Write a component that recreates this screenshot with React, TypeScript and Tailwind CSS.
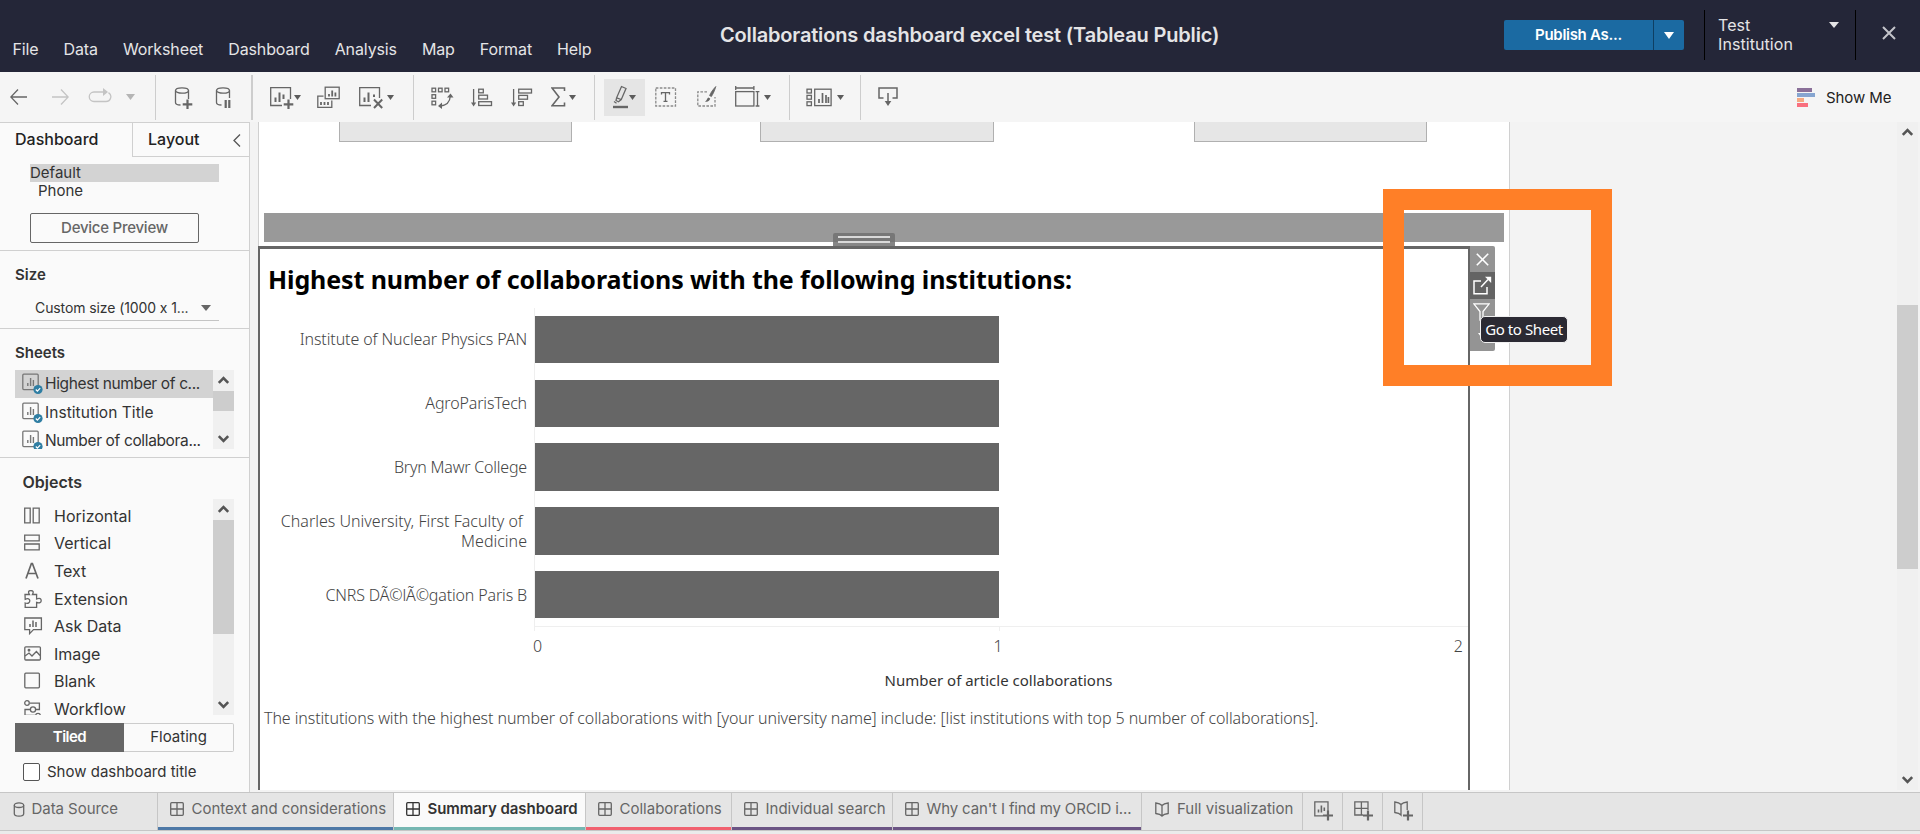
import type { ReactNode } from "react";

type IconProps = { w: number; h?: number; className?: string; children: ReactNode };

function Icon({ w, h = 24, className = "", children }: IconProps) {
  return (
    <svg
      width={w}
      height={h}
      viewBox={`0 0 ${w} ${h}`}
      fill="none"
      stroke="currentColor"
      strokeWidth="1.3"
      className={`shrink-0 ${className}`}
    >
      {children}
    </svg>
  );
}

function Caret({ className = "" }: { className?: string }) {
  return (
    <svg width="7" height="5" viewBox="0 0 7 5" className={`shrink-0 fill-[#5c5c5c] ${className}`}>
      <path d="M0 0H7L3.5 5Z" />
    </svg>
  );
}

function Divider({ className = "" }: { className?: string }) {
  return <div className={`h-[45px] w-px shrink-0 self-center bg-[#cdcdcd] ${className}`} />;
}

function GridIcon({ className = "" }: { className?: string }) {
  return (
    <Icon w={14} h={14} className={className}>
      <rect x="0.7" y="0.7" width="12.6" height="12.6" rx="1" />
      <path d="M7 1V13M1 7H13" />
    </Icon>
  );
}

function BookPath() {
  return <path d="M7 3.5C5.5 1.8 3 1.2 0.8 1V11.5C3 11.8 5.5 12.4 7 14C8.5 12.4 11 11.8 13.2 11.5V1C11 1.2 8.5 1.8 7 3.5ZM7 3.5V14" />;
}

const menus = ["File", "Data", "Worksheet", "Dashboard", "Analysis", "Map", "Format", "Help"];

function Header() {
  return (
    <header className="flex h-[72px] bg-[#242638] text-[#e4e4e6]">
      <nav className="mt-[39px] flex h-5 w-[720px] gap-[25px] pl-[12.5px] text-[16px] leading-5 tracking-[-0.12px]">
        {menus.map((m) => (
          <span key={m}>{m}</span>
        ))}
      </nav>
      <h1 className="mt-[23px] w-[784px] text-[20px] font-semibold leading-6 tracking-[-0.17px]">
        Collaborations dashboard excel test (Tableau Public)
      </h1>
      <div className="mt-[20px] flex h-[30px] w-[180px] overflow-hidden rounded-[2px] bg-[#1b6aa2] text-white">
        <div className="flex w-[149px] items-center justify-center text-[15px] font-semibold tracking-[-0.3px]">
          Publish As...
        </div>
        <div className="flex flex-1 items-center justify-center border-l border-[#0e3f63]">
          <svg width="10" height="7" viewBox="0 0 10 7" fill="white">
            <path d="M0 0H10L5 7Z" />
          </svg>
        </div>
      </div>
      <div className="ml-[20px] mt-[10px] flex h-[50px] w-[152px] border-x border-black pl-[13px] pt-[6px]">
        <div className="w-[110px] text-[16px] leading-[19px] tracking-[0.08px]">
          Test
          <br />
          Institution
        </div>
        <svg width="10" height="6" viewBox="0 0 10 6" fill="#e4e4e6" className="mt-[6px] ml-[1px]">
          <path d="M0 0H10L5 6Z" />
        </svg>
      </div>
      <svg width="14" height="14" viewBox="0 0 14 14" stroke="#c4c4ca" strokeWidth="2" className="ml-[26px] mt-[26px]">
        <path d="M1 1L13 13M13 1L1 13" />
      </svg>
    </header>
  );
}

function Toolbar() {
  return (
    <div className="flex h-[50px] items-center bg-[#f5f5f5] text-[#666]">
      <Icon w={17} className="ml-[10px]">
        <path d="M17 12H1M8 4.5L0.8 12L8 19.5" />
      </Icon>
      <Icon w={17} className="ml-[25px] text-[#c4c4c4]">
        <path d="M0 12H16M9 4.5L16.2 12L9 19.5" />
      </Icon>
      <Icon w={24} className="ml-[19px] text-[#c4c4c4]">
        <path d="M15 7H6A4.6 4.6 0 0 0 6 16.5H18A4.8 4.8 0 0 0 20.5 7.6" />
        <path d="M15 3L20 7L15 11Z" fill="currentColor" stroke="none" />
      </Icon>
      <svg width="9" height="6" viewBox="0 0 9 6" className="ml-[14px] fill-[#b5b5b5]">
        <path d="M0 0H9L4.5 6Z" />
      </svg>
      <Divider className="ml-[20px]" />
      <Icon w={19} className="ml-[18px]">
        <ellipse cx="8" cy="5.5" rx="6.5" ry="2.7" />
        <path d="M1.5 5.5V17.5C1.5 19 4 20 6.5 20M14.5 5.5V14" />
        <path d="M13.5 14.5V24M8.7 19.3H18.3" strokeWidth="2.2" />
      </Icon>
      <Icon w={17} className="ml-[22px]">
        <ellipse cx="8" cy="5.5" rx="6.5" ry="2.7" />
        <path d="M1.5 5.5V17.5C1.5 19 4 20 6.5 20M14.5 5.5V13" />
        <path d="M10.7 15V23M14.3 15V23" strokeWidth="2.2" />
      </Icon>
      <div className="ml-[19px] h-[45px] w-[2px] bg-[#cdcdcd]" />
      <Icon w={24} className="ml-[17px]">
        <path d="M12 20.5H0.7V2.7H20.5V14" />
        <path d="M5.5 17V12.5M9.5 17V7.5M13.5 14V9.5" strokeWidth="2" />
        <path d="M18.5 14.5V24M13.7 19.3H23.3" strokeWidth="2.2" />
      </Icon>
      <Caret />
      <Icon w={24} className="ml-[16px]">
        <rect x="8.2" y="2.2" width="14" height="11.5" />
        <path d="M12 11.5V9M15.2 11.5V5.5M18.4 11.5V7.5" strokeWidth="1.8" />
        <path d="M6.5 11.2H0.8V22.4H14.8V15.5" />
        <path d="M4 20V17M7.5 20V17M11 20V17" strokeWidth="1.8" />
      </Icon>
      <Icon w={25} className="ml-[18px]">
        <path d="M12 20.5H0.7V2.7H20.5V13" />
        <path d="M5.5 17V12.5M9.5 17V7.5M15 12V9.5" strokeWidth="2" />
        <path d="M15 14.5L23.2 23M23.2 14.5L15 23" strokeWidth="2" />
      </Icon>
      <Caret className="ml-[3px]" />
      <Divider className="ml-[19px]" />
      <Icon w={23} className="ml-[17px]">
        <rect x="1" y="3.2" width="3.6" height="3.6" />
        <rect x="7.5" y="3.2" width="3.6" height="3.6" />
        <rect x="14" y="3.2" width="3.6" height="3.6" />
        <rect x="1" y="9.7" width="3.6" height="3.6" />
        <rect x="1" y="16.2" width="3.6" height="3.6" />
        <path d="M9 21C15 20.5 19 17 19.3 11" />
        <path d="M11 17.5L7 21L11 24ZM16 12.5L19.5 8.5L22.5 12.5Z" fill="currentColor" stroke="none" />
      </Icon>
      <Icon w={22} className="ml-[17px]">
        <path d="M2.6 4V19" />
        <path d="M0 17.5H5.2L2.6 21.5Z" fill="currentColor" stroke="none" />
        <rect x="7.7" y="4.2" width="4.6" height="3.6" />
        <rect x="7.7" y="10.2" width="8.8" height="3.8" />
        <rect x="7.7" y="16.7" width="12.8" height="3.8" />
      </Icon>
      <Icon w={22} className="ml-[18px]">
        <path d="M2.6 4V19" />
        <path d="M0 17.5H5.2L2.6 21.5Z" fill="currentColor" stroke="none" />
        <rect x="7.7" y="4.2" width="12.8" height="3.8" />
        <rect x="7.7" y="10.4" width="8.8" height="3.8" />
        <rect x="7.7" y="16.7" width="4.6" height="3.8" />
      </Icon>
      <Icon w={15} className="ml-[18px]">
        <path d="M13.5 6V3H1L8 12L1 20.8H13.5V17.5" strokeWidth="1.6" />
      </Icon>
      <Caret className="ml-[3px]" />
      <Divider className="ml-[18px]" />
      <div className="ml-[9px] flex h-[37px] w-[41px] items-center bg-[#e5e5e5] pl-[8px]">
        <Icon w={17}>
          <path d="M9.5 1.5L14 3.5L9.3 14.5L4.6 12.8ZM4.6 12.8L4 15.5L6.5 16.8L9.3 14.5M2 16.5L4.5 18.2" />
          <path d="M1 22H16" strokeWidth="2.4" />
        </Icon>
        <Caret />
      </div>
      <Icon w={22} className="ml-[10px]">
        <rect x="0.8" y="3" width="19.7" height="18" strokeDasharray="2.6 1.4" stroke="#8a8a8a" />
        <path d="M6.5 9.5V7.6H14.5V9.5M10.5 7.6V16.4M8.5 16.4H12.5" />
      </Icon>
      <Icon w={20} className="ml-[20px]">
        <path d="M10 6.8H0.8V21H18V12" strokeDasharray="2.6 1.4" stroke="#8a8a8a" />
        <path d="M18.8 1.5C16 4.5 13.8 7.5 12.6 10.6L14.4 11.6C16.2 8.6 17.8 5.4 18.8 1.5Z" fill="currentColor" strokeWidth="0.8" />
        <path d="M8 16.5C9.8 15.8 9.8 13.6 11.2 12.4L13.2 13.6C12.8 16 10.6 17.2 8 16.5Z" fill="currentColor" stroke="none" />
      </Icon>
      <Icon w={25} className="ml-[18px]">
        <rect x="0.7" y="6.6" width="18.2" height="14.4" />
        <path d="M0.7 1V5M18.9 1V5M0.7 3H18.9M22.5 6.6V21M20.6 6.6H24.4M20.6 21H24.4" />
      </Icon>
      <Caret className="ml-[4px]" />
      <Divider className="ml-[18px]" />
      <Icon w={26} className="ml-[16px]">
        <rect x="1" y="4.2" width="4.4" height="3.8" />
        <rect x="1" y="10.4" width="4.4" height="3.8" />
        <rect x="1" y="16.8" width="4.4" height="3.8" />
        <rect x="8.7" y="4.2" width="16.4" height="16.4" />
        <path d="M13 18V14M16.5 18V8M20 18V10M22.4 18V12" strokeWidth="1.7" />
      </Icon>
      <Caret className="ml-[5px]" />
      <Divider className="ml-[16px]" />
      <Icon w={20} className="ml-[17px]">
        <path d="M5.5 13H1V3H19V13H14.5M10 8V17" strokeWidth="1.5" />
        <path d="M6.7 16H13.3L10 21Z" fill="currentColor" stroke="none" />
      </Icon>
      <svg width="19" height="20" viewBox="0 0 19 20" className="ml-auto">
        <path d="M0 1H15V5H0Z" fill="#8a7099" />
        <path d="M0 6H18V10H0Z" fill="#86a5d0" />
        <path d="M0 11H7V15H0Z" fill="#f4a982" />
        <path d="M0 16H11V20H0Z" fill="#f9707f" />
      </svg>
      <span className="ml-[10px] mt-[2px] w-[94px] text-[15px] leading-5 tracking-[-0.1px] text-[#222]">Show Me</span>
    </div>
  );
}

function Scroll({ children, className = "" }: { children: ReactNode; className?: string }) {
  return (
    <div className={`flex w-[21px] shrink-0 flex-col justify-between bg-[#f0f0f0] text-[#555] ${className}`}>
      <svg width="21" height="20" viewBox="0 0 21 20" fill="none" stroke="currentColor" strokeWidth="2.6" className="shrink-0">
        <path d="M5.8 12.8L10.5 8L15.2 12.8" />
      </svg>
      {children}
      <svg width="21" height="20" viewBox="0 0 21 20" fill="none" stroke="currentColor" strokeWidth="2.6" className="shrink-0">
        <path d="M5.8 7.2L10.5 12L15.2 7.2" />
      </svg>
    </div>
  );
}

function SheetIcon() {
  return (
    <Icon w={21} h={22} className="mt-[3px] text-[#777]">
      <rect x="0.8" y="1.2" width="15.4" height="15.4" rx="1" />
      <path d="M5.8 13V10M8.6 13V5M11.4 13V7" strokeWidth="1.4" />
      <circle cx="16" cy="16.5" r="4.6" fill="#2f7ea3" stroke="none" />
      <path d="M13.8 16.5L15.4 18.1L18.2 15.1" stroke="white" strokeWidth="1.2" />
    </Icon>
  );
}

const objects: { name: string; icon: ReactNode }[] = [
  { name: "Horizontal", icon: <path d="M0.7 1.2H6.2V15.8H0.7ZM9.2 1.2H15.2V15.8H9.2Z" /> },
  { name: "Vertical", icon: <path d="M0.7 1.2H15.2V6.8H0.7ZM0.7 10H15.2V15.8H0.7Z" /> },
  { name: "Text", icon: <path d="M2 16.5L7.4 1.5H8.4L14 16.5M4 11.5H12" strokeWidth="1.7" /> },
  {
    name: "Extension",
    icon: (
      <path d="M1 4.5H5.5C3.5 1.5 5 0.6 6.8 0.6S10.2 1.5 8.4 4.5H12.6V9C16 7.5 17.2 9 17.2 10.8S15.5 13.6 12.6 12.4V17.4H1.2V13C4.5 14 5.8 12.5 5.8 10.8S4 8 1.2 9.3Z" />
    ),
  },
  {
    name: "Ask Data",
    icon: (
      <>
        <path d="M0.8 1H17.4V12.6H9.5L5.6 16.6V12.6H0.8Z" />
        <path d="M6 10V7M9 10V3.5M12 10V5" strokeWidth="1.5" />
      </>
    ),
  },
  {
    name: "Image",
    icon: (
      <>
        <rect x="0.8" y="1.8" width="15.6" height="13.2" rx="1" />
        <path d="M1 11L5 8L8 11L12.4 6.5L16 10.5" />
        <circle cx="5" cy="5.2" r="0.8" />
      </>
    ),
  },
  { name: "Blank", icon: <rect x="0.8" y="1.2" width="14.6" height="14.6" rx="1" /> },
  {
    name: "Workflow",
    icon: (
      <>
        <circle cx="3" cy="3" r="2.3" />
        <circle cx="9" cy="9.5" r="2.6" />
        <circle cx="14" cy="15.8" r="2.4" />
        <path d="M6 3.2H15.4V9.5H11.8M6.2 9.5H1V15.5H11" />
      </>
    ),
  },
];

function Sidebar() {
  return (
    <aside className="flex w-[250px] shrink-0 flex-col border-r border-t border-[#d0d0d0] bg-[#fafafa] text-[#333]">
      <section className="border-b border-[#d0d0d0] pb-[7px]">
        <div className="flex h-[34px] text-[16px] font-medium leading-[33px] text-[#222]">
          <div className="w-[132px] pl-[15px]">Dashboard</div>
          <div className="flex flex-1 items-center border-b border-l border-[#d0d0d0] pl-[15px]">
            Layout
            <Icon w={8} h={13} className="ml-[33px] mt-[2px] text-[#555]">
              <path d="M7 0.5L1 6.5L7 12.5" />
            </Icon>
          </div>
        </div>
        <div className="ml-[30px] mt-[7px] w-[189px] text-[15px] leading-[18px]">
          <div className="bg-[#d3d3d3]">Default</div>
          <div className="pl-[8px]">Phone</div>
        </div>
        <button className="ml-[30px] mt-[13px] block h-[30px] w-[169px] rounded-[2px] border border-[#666] pb-[2px] text-[15px] font-medium leading-none tracking-[-0.25px] text-[#666]">
          Device Preview
        </button>
      </section>

      <section className="border-b border-[#d0d0d0] pb-[7px] pt-[14px]">
        <h2 className="pl-[15px] text-[15px] font-semibold leading-[19px]">Size</h2>
        <div className="ml-[30px] mt-[11px] flex h-[26px] w-[189px] items-center justify-between border-b border-[#c4c4c4] pl-[5px] pr-[8px] text-[14px] tracking-[-0.1px]">
          <span className="[font-feature-settings:'calt'_0]">Custom size (1000 x 1...</span>
          <svg width="10" height="6" viewBox="0 0 10 6" fill="#666">
            <path d="M0 0H10L5 6Z" />
          </svg>
        </div>
      </section>

      <section className="border-b border-[#d0d0d0] pb-[8px] pt-[14px]">
        <h2 className="pl-[15px] text-[15px] font-semibold leading-[19px]">Sheets</h2>
        <div className="ml-[15px] mt-[8px] flex h-[79px] w-[219px] overflow-hidden">
          <div className="flex flex-1 flex-col gap-[0.5px] text-[15.5px] leading-[28px]">
            {[
              { name: "Highest number of c...", tracking: "tracking-[-0.36px]" },
              { name: "Institution Title", tracking: "tracking-[0.05px]" },
              { name: "Number of collabora...", tracking: "tracking-[-0.36px]" },
            ].map((s, i) => (
              <div key={s.name} className={`flex h-[28px] shrink-0 pl-[7px] ${i === 0 ? "bg-[#d3d3d3]" : ""}`}>
                <SheetIcon />
                <span className={`ml-[2px] whitespace-nowrap ${s.tracking}`}>{s.name}</span>
              </div>
            ))}
          </div>
          <Scroll>
            <div className="mb-[18px] mt-px h-[21px] bg-[#cdcdcd]" />
          </Scroll>
        </div>
      </section>

      <section className="flex flex-col pt-[14px]">
        <h2 className="pl-[22.5px] text-[16px] font-semibold leading-5">Objects</h2>
        <div className="ml-[15px] mt-[7px] flex h-[216px] w-[219px] overflow-hidden">
          <div className="flex-1 pt-[3px] text-[16px]">
            {objects.map((o) => (
              <div key={o.name} className="flex h-[27.6px] items-center pl-[9px]">
                <Icon w={19} h={18} className="text-[#666]">
                  {o.icon}
                </Icon>
                <span className="ml-[11px] leading-3">{o.name}</span>
              </div>
            ))}
          </div>
          <Scroll>
            <div className="mb-[61px] mt-px h-[114px] bg-[#cdcdcd]" />
          </Scroll>
        </div>
        <div className="ml-[15px] mt-[8px] flex h-[29px] w-[219px] text-center text-[15px] leading-[26px]">
          <div className="w-[109px] bg-[#666] font-semibold leading-[28px] tracking-[-0.5px] text-white">Tiled</div>
          <div className="flex-1 rounded-r-[2px] border border-l-0 border-[#ccc]">Floating</div>
        </div>
        <label className="ml-[23px] mt-[11px] flex h-[18px] items-center text-[15px] leading-none">
          <span className="mr-[7px] h-[18px] w-[17px] rounded-[2px] border border-[#555] bg-white" />
          <span className="mb-px">Show dashboard title</span>
        </label>
      </section>
    </aside>
  );
}

const bars = [
  { label: "Institute of Nuclear Physics PAN", tracking: "tracking-[-0.1px]" },
  { label: "AgroParisTech", tracking: "tracking-[-0.15px]" },
  { label: "Bryn Mawr College", tracking: "tracking-[-0.2px]" },
  { label: "Charles University, First Faculty of\u00a0\nMedicine", tracking: "tracking-[0.01px]" },
  { label: "CNRS DÃ©lÃ©gation Paris B", tracking: "tracking-[-0.15px]" },
];

function Chart() {
  return (
    <div className="mt-[13.6px] text-[16px] font-light text-[#444]">
      {bars.map((b) => (
        <div key={b.label} className="flex h-[63.8px] items-center">
          <div className={`w-[274px] whitespace-pre pr-[7px] text-right leading-5 ${b.tracking}`}>{b.label}</div>
          <div className="flex h-full items-center border-l border-[#efefef]">
            <div className="h-[47.4px] w-[464px] bg-[#666]" />
          </div>
        </div>
      ))}
      <div className="-mt-[0.6px] ml-[274px] h-[5px] border-l border-t border-[#efefef]">
        <div className="h-full w-[465px] border-r border-[#efefef]" />
      </div>
      <div className="ml-[273px] mt-[5px] flex w-[930px] justify-between leading-5">
        <span>0</span>
        <span>1</span>
        <span>2</span>
      </div>
      <div className="ml-[274.5px] mt-[14px] w-[928px] text-center text-[15px] font-normal leading-5 text-[#333]">
        Number of article collaborations
      </div>
    </div>
  );
}

function ZoneControls() {
  return (
    <div className="absolute -top-[3px] left-[1210px] flex h-[105px] w-[25px] flex-col overflow-hidden rounded-r-[2px] bg-[#949494] text-white">
      <div className="flex h-[26px] items-center justify-center">
        <Icon w={13} h={13} className="mr-px">
          <path d="M0.8 0.8L12.2 12.2M12.2 0.8L0.8 12.2" strokeWidth="1.6" />
        </Icon>
      </div>
      <div className="flex h-[27px] items-center justify-center bg-[#646464]">
        <Icon w={19} h={19} className="mr-px">
          <path d="M8 5H1V17.8H14V11M8 11L15 3.5" strokeWidth="1.5" />
          <path d="M12 0.8H18.2V7Z" fill="currentColor" stroke="none" />
        </Icon>
      </div>
      <div className="flex h-[26px] justify-center pr-[2px] pt-[4px]">
        <Icon w={17} h={18}>
          <path d="M0.8 0.8H16.2L10 8.5V17H7V8.5Z" />
        </Icon>
      </div>
      <svg width="9" height="6" viewBox="0 0 9 6" fill="white" className="ml-[8px] mt-[8px]">
        <path d="M0 0H9L4.5 6Z" />
      </svg>
    </div>
  );
}

function Canvas() {
  return (
    <main className="relative flex flex-1 bg-[#f3f3f3] pb-[2px] pl-[8px]">
      <div className="flex w-[1252px] flex-col border-x border-[#d0d0d0] bg-white font-['Noto_Sans','Open_Sans',sans-serif]">
        <div className="flex h-[20px] pl-[80px]">
          <div className="w-[233px] border border-t-0 border-[#b0b0b0] bg-[#e6e6e6]" />
          <div className="ml-[188px] w-[234px] border border-t-0 border-[#b0b0b0] bg-[#e6e6e6]" />
          <div className="ml-[200px] w-[233px] border border-t-0 border-[#b0b0b0] bg-[#e6e6e6]" />
        </div>
        <div className="ml-[5px] mt-[71px] h-[29px] w-[1240px] shrink-0 bg-[#999]" />
        <div className="relative -ml-px mt-[4px] w-[1212px] flex-1 border-x-2 border-t-[3px] border-[#666] pt-[15px]">
          <div className="absolute -top-[16px] left-[573px] flex h-[13px] w-[62px] flex-col items-center gap-[3px] rounded-t-[2px] bg-[#717171]/85 pt-[3px]">
            <div className="h-[2px] w-[52px] bg-[#d9d9d9]" />
            <div className="h-[2px] w-[52px] bg-[#d9d9d9]" />
          </div>
          <h2 className="pl-[8px] text-[25px] font-bold leading-[30px] tracking-[-0.1px] text-black">
            Highest number of collaborations with the following institutions:
          </h2>
          <Chart />
          <p className="mt-[18px] whitespace-nowrap pl-[4px] text-[16px] font-light leading-5 tracking-[-0.095px] text-[#444]">
            The institutions with the highest number of collaborations with [your university name] include: [list
            institutions with top 5 number of collaborations].
          </p>
          <ZoneControls />
        </div>
      </div>
      <Scroll className="ml-auto mr-[2px]">
        <div className="mb-auto mt-[163px] h-[264px] bg-[#cdcdcd]" />
      </Scroll>
      <div className="absolute left-[1133px] top-[67px] h-[197px] w-[229px] border-[21px] border-[#ff7f27]" />
      <div className="absolute left-[1230px] top-[194px] h-[27px] w-[88px] rounded-[5px] border border-[#f0f0f0] bg-[#2b2a33] text-center font-['Noto_Sans',sans-serif] text-[15px] leading-[25px] tracking-[-0.4px] text-white">
        Go to Sheet
      </div>
    </main>
  );
}

const tabs = [
  { label: "Context and considerations", w: "w-[236px]", line: "border-[#4e79a7]" },
  { label: "Summary dashboard", w: "w-[192px]", line: "border-[#76b7b2]", active: true },
  { label: "Collaborations", w: "w-[146px]", line: "border-[#f1616f]" },
  { label: "Individual search", w: "w-[161px]", line: "border-[#6b5484]" },
  { label: "Why can't I find my ORCID i...", w: "w-[249px]", line: "border-[#6b5484]", tight: true },
];

function SheetTabs() {
  return (
    <footer className="h-[42px] bg-[#ebebeb]">
      <div className="flex h-[39px] border-y border-[#c6c6c6] bg-[#e5e5e5] text-[15px] leading-5 text-[#666]">
        <div className="flex w-[158px] border-r border-[#c6c6c6] pl-[13px] pt-[6px]">
          <Icon w={12} h={15} className="mt-[3px]">
            <ellipse cx="6" cy="3.2" rx="4.7" ry="2.3" />
            <path d="M1.3 3.2V11.8C1.3 15 10.7 15 10.7 11.8V3.2" />
          </Icon>
          <span className="ml-[6.5px] tracking-[-0.05px]">Data Source</span>
        </div>
        {tabs.map((t) => (
          <div key={t.label} className={`border-r border-[#c6c6c6] ${t.w}`}>
            <div
              className={`flex h-full whitespace-nowrap border-b-[3px] pl-[12px] pt-[6px] ${t.line} ${
                t.active ? "bg-[#fafafa] font-semibold tracking-[-0.05px] text-[#333]" : ""
              } ${t.tight ? "tracking-[-0.13px]" : ""}`}
            >
              <GridIcon className="mt-[3px]" />
              <span className="ml-[7.5px]">{t.label}</span>
            </div>
          </div>
        ))}
        <div className="flex w-[161px] border-r border-[#c6c6c6] pl-[13px] pt-[6px]">
          <Icon w={14} h={15} className="mt-[3px]">
            <BookPath />
          </Icon>
          <span className="ml-[8px]">Full visualization</span>
        </div>
        <div className="w-[40px] border-r border-[#c6c6c6] pl-[11px] pt-[8px]">
          <Icon w={20} h={20}>
            <path d="M9 14.8H0.8V0.8H14V10" />
            <path d="M4.5 11.5V8.5M7.4 11.5V4.5M10.3 10V6.5" strokeWidth="1.6" />
            <path d="M14 9.5V19.5M9 14.5H19" strokeWidth="2.2" />
          </Icon>
        </div>
        <div className="w-[40px] border-r border-[#c6c6c6] pl-[11px] pt-[8px]">
          <Icon w={20} h={20}>
            <path d="M9 14H0.8V0.8H14V9M7.4 1V14M1 7.4H14" />
            <path d="M14 9.5V19.5M9 14.5H19" strokeWidth="2.2" />
          </Icon>
        </div>
        <div className="w-[40px] border-r border-[#c6c6c6] pl-[11px] pt-[8px]">
          <Icon w={20} h={20}>
            <path d="M7 3.5C5.5 1.8 3 1.2 0.8 1V11.5C3 11.8 5.5 12.4 7 14V3.5C8.5 1.8 11 1.2 13.2 1V9" />
            <path d="M14 9.5V19.5M9 14.5H19" strokeWidth="2.2" />
          </Icon>
        </div>
      </div>
    </footer>
  );
}

export default function App() {
  return (
    <div className="h-[834px] w-[1920px] overflow-hidden font-['Inter',sans-serif]">
      <Header />
      <Toolbar />
      <div className="flex h-[670px]">
        <Sidebar />
        <Canvas />
      </div>
      <SheetTabs />
    </div>
  );
}
